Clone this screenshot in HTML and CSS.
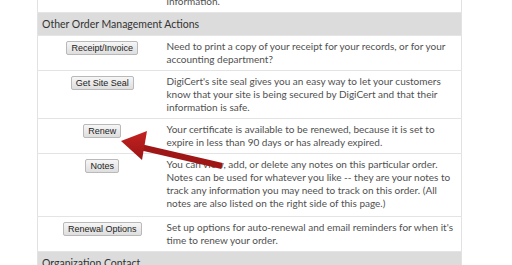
FILE: index.html
```html
<!DOCTYPE html>
<html lang="en">
<head>
  <meta charset="UTF-8" />
  <title>Order Management Actions</title>
  <link rel="stylesheet" href="styles.css">
</head>
<body>
  <div class="page">
    <table class="actions">
      <tr class="prev">
        <td class="btn-cell"></td>
        <td class="desc">information.</td>
      </tr>
      <tr class="section">
        <th colspan="2">Other Order Management Actions</th>
      </tr>
      <tr>
        <td class="btn-cell"><button>Receipt/Invoice</button></td>
        <td class="desc">Need to print a copy of your receipt for your records, or for your accounting department?</td>
      </tr>
      <tr>
        <td class="btn-cell"><button>Get Site Seal</button></td>
        <td class="desc">DigiCert's site seal gives you an easy way to let your customers know that your site is being secured by DigiCert and that their information is safe.</td>
      </tr>
      <tr>
        <td class="btn-cell"><button>Renew</button></td>
        <td class="desc">Your certificate is available to be renewed, because it is set to expire in less than 90 days or has already expired.</td>
      </tr>
      <tr class="tall">
        <td class="btn-cell"><button>Notes</button></td>
        <td class="desc">You can view, add, or delete any notes on this particular order. Notes can be used for whatever you like -- they are your notes to track any information you may need to track on this order. (All notes are also listed on the right side of this page.)</td>
      </tr>
      <tr>
        <td class="btn-cell"><button>Renewal Options</button></td>
        <td class="desc">Set up options for auto-renewal and email reminders for when it's time to renew your order.</td>
      </tr>
      <tr class="section">
        <th colspan="2">Organization Contact</th>
      </tr>
    </table>

    <!-- callout arrow drawn over the table -->
    <svg class="arrow" width="512" height="265" viewBox="0 0 512 265">
      <defs>
        <linearGradient id="red" x1="0" y1="0" x2="0" y2="1">
          <stop offset="0" stop-color="#c42222" />
          <stop offset="1" stop-color="#9c1414" />
        </linearGradient>
      </defs>
      <line x1="140" y1="147" x2="222" y2="166" stroke="#9e1616" stroke-width="6" />
      <polygon points="121,141 147,131 142,160" fill="url(#red)" />
    </svg>
  </div>
</body>
</html>
```

FILE: styles.css
```css
* { box-sizing: border-box; }
body {
  margin: 0;
  background: #fff;
  font-family: 'Lato', sans-serif;
}
.page {
  position: relative;
  width: 512px;
  height: 265px;
  overflow: hidden;
  padding-left: 37px;
}
.actions {
  width: 425px;
  margin-top: -9px;
  border-collapse: collapse;
  border-left: 1px solid #e2e2e2;
  border-right: 1px solid #e2e2e2;
}
.actions td {
  vertical-align: top;
  padding: 4px 4px 4px 0;
  border-bottom: 1px solid #e4e4e4;
  font-size: 10px;
  line-height: 13px;
  color: #505050;
}
.actions td.btn-cell {
  width: 129px;
  padding: 5px 0 0;
  text-align: center;
}
.actions td.desc {
  padding-left: 0;
}
.tall td.desc {
  padding-bottom: 6px;
}
.section th {
  background: #dcdcdc;
  text-align: left;
  font-weight: normal;
  font-size: 10.5px;
  color: #333;
  height: 23px;
  padding: 0 4px;
  border-bottom: 1px solid #e4e4e4;
}
button {
  font-family: 'Liberation Sans', Arial, sans-serif;
  font-size: 9px;
  color: #222;
  height: 14px;
  padding: 0 4px;
  border: 1px solid #b9b9b9;
  border-radius: 2px;
  background: linear-gradient(#f6f6f6, #dedede);
}
.arrow {
  position: absolute;
  left: 0;
  top: 0;
}
```
